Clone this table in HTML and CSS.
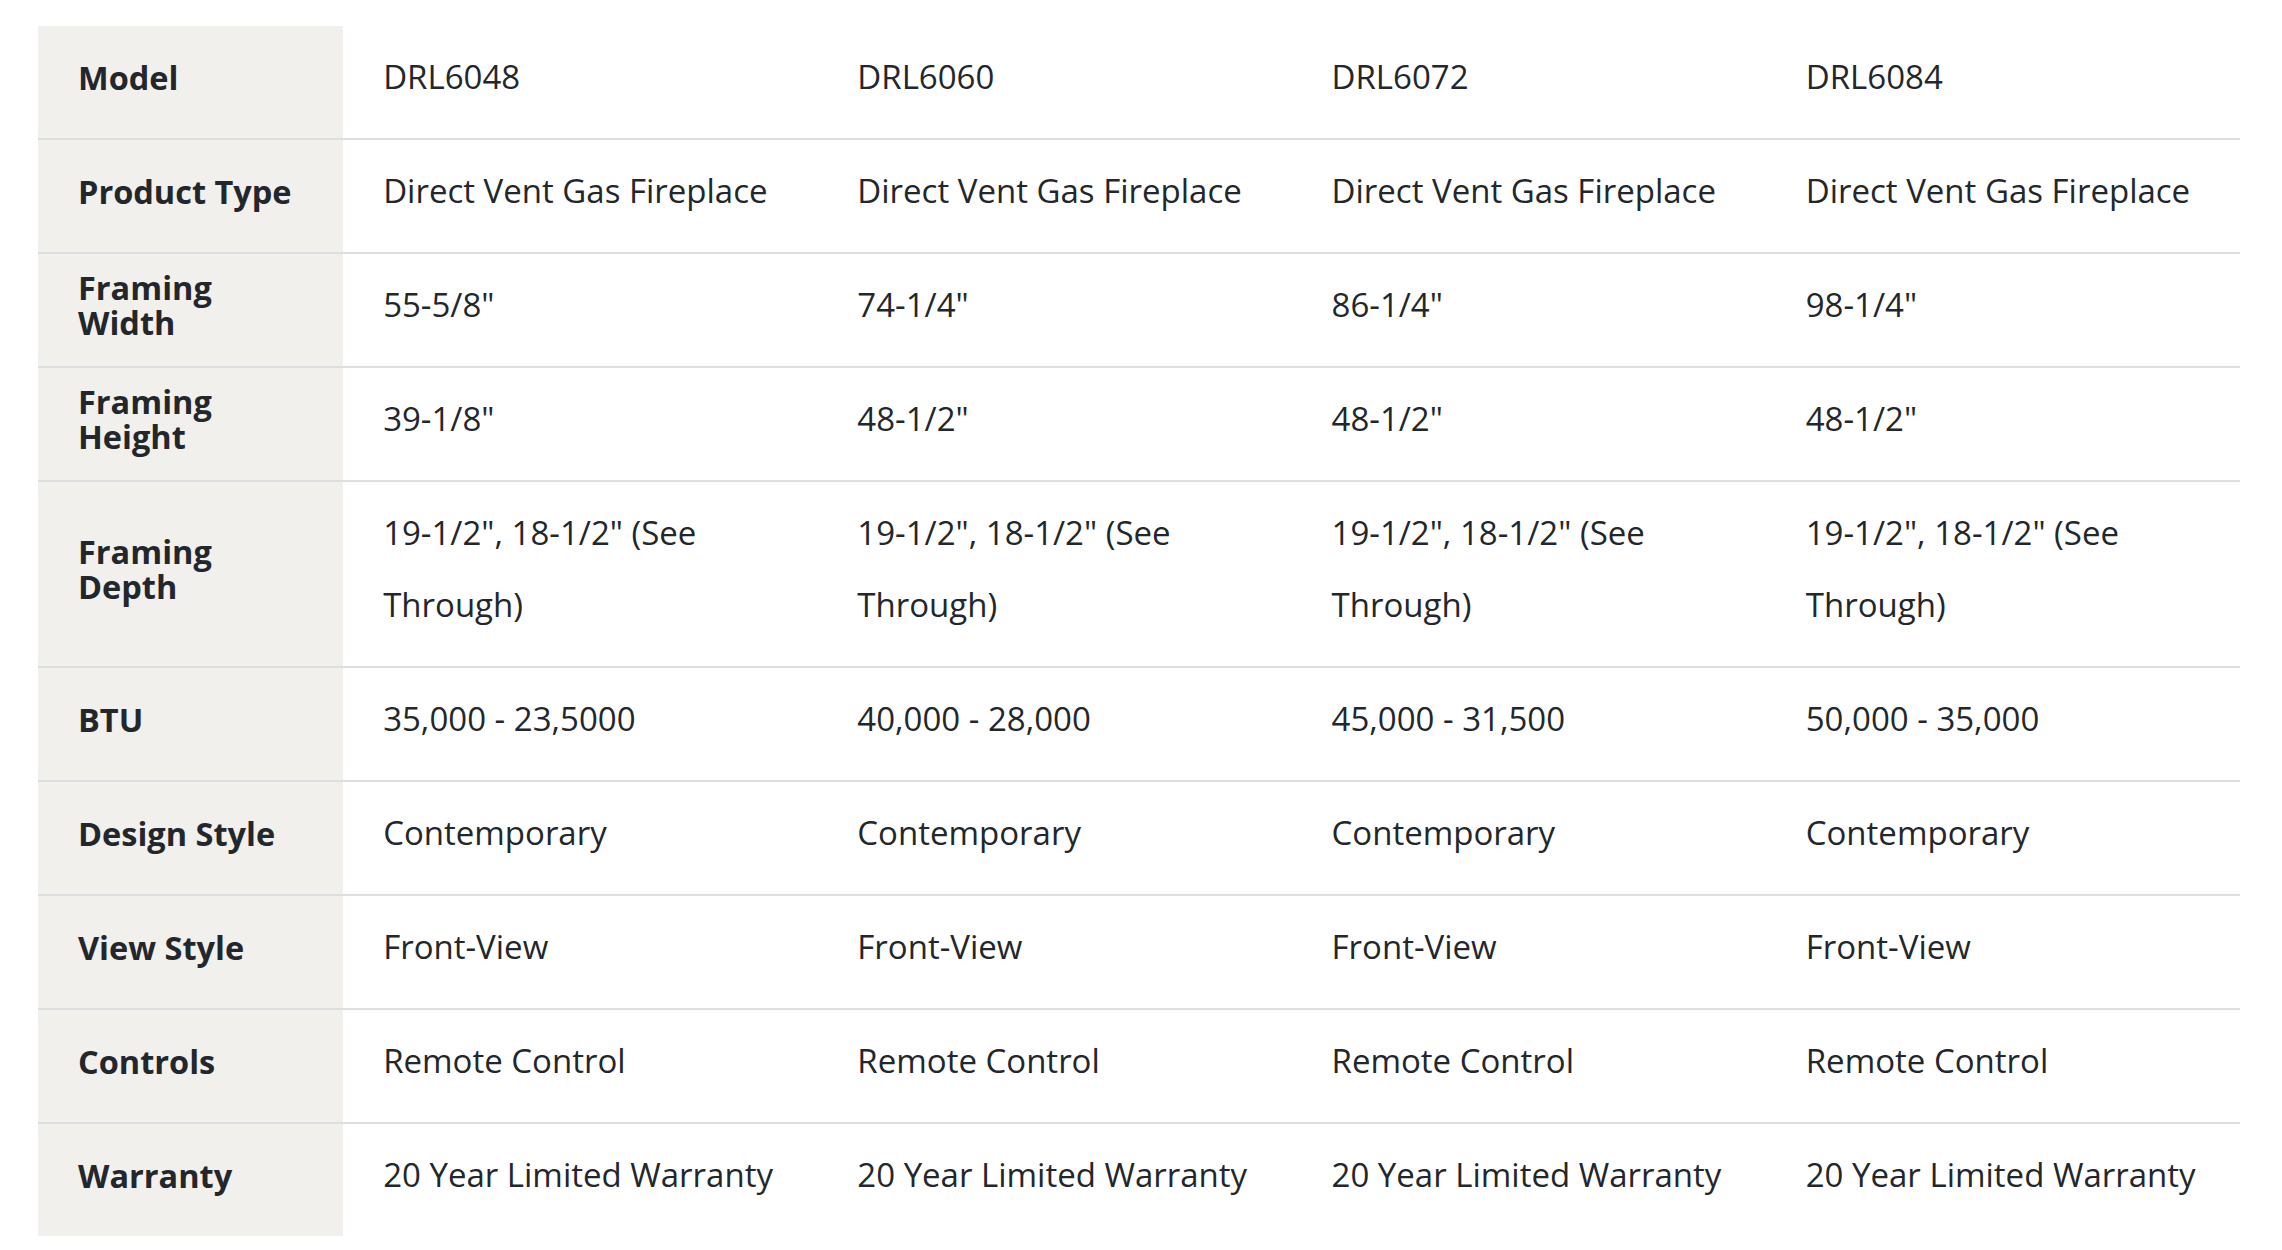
FILE: index.html
```html
<!DOCTYPE html>
<html lang="en">
<head>
  <meta charset="UTF-8">
  <meta name="viewport" content="width=device-width, initial-scale=1.0">
  <title>Specifications</title>
  <link rel="stylesheet" href="styles.css">
</head>
<body>
  <table class="specs">
    <colgroup>
      <col class="col-label">
      <col class="col-model">
      <col class="col-model">
      <col class="col-model">
      <col class="col-model">
    </colgroup>
    <tbody>
      <tr>
        <th>Model</th>
        <td>DRL6048</td>
        <td>DRL6060</td>
        <td>DRL6072</td>
        <td>DRL6084</td>
      </tr>
      <tr>
        <th>Product Type</th>
        <td>Direct Vent Gas Fireplace</td>
        <td>Direct Vent Gas Fireplace</td>
        <td>Direct Vent Gas Fireplace</td>
        <td>Direct Vent Gas Fireplace</td>
      </tr>
      <tr>
        <th>Framing Width</th>
        <td>55-5/8"</td>
        <td>74-1/4"</td>
        <td>86-1/4"</td>
        <td>98-1/4"</td>
      </tr>
      <tr>
        <th>Framing Height</th>
        <td>39-1/8"</td>
        <td>48-1/2"</td>
        <td>48-1/2"</td>
        <td>48-1/2"</td>
      </tr>
      <tr>
        <th>Framing Depth</th>
        <td>19-1/2", 18-1/2" (See Through)</td>
        <td>19-1/2", 18-1/2" (See Through)</td>
        <td>19-1/2", 18-1/2" (See Through)</td>
        <td>19-1/2", 18-1/2" (See Through)</td>
      </tr>
      <tr>
        <th>BTU</th>
        <td>35,000 - 23,5000</td>
        <td>40,000 - 28,000</td>
        <td>45,000 - 31,500</td>
        <td>50,000 - 35,000</td>
      </tr>
      <tr>
        <th>Design Style</th>
        <td>Contemporary</td>
        <td>Contemporary</td>
        <td>Contemporary</td>
        <td>Contemporary</td>
      </tr>
      <tr>
        <th>View Style</th>
        <td>Front-View</td>
        <td>Front-View</td>
        <td>Front-View</td>
        <td>Front-View</td>
      </tr>
      <tr>
        <th>Controls</th>
        <td>Remote Control</td>
        <td>Remote Control</td>
        <td>Remote Control</td>
        <td>Remote Control</td>
      </tr>
      <tr>
        <th>Warranty</th>
        <td>20 Year Limited Warranty</td>
        <td>20 Year Limited Warranty</td>
        <td>20 Year Limited Warranty</td>
        <td>20 Year Limited Warranty</td>
      </tr>
    </tbody>
  </table>
</body>
</html>
```

FILE: styles.css
```css
* {
  margin: 0;
  padding: 0;
  box-sizing: border-box;
}

body {
  background: #fff;
  padding: 26px 0 0 38px;
  font-family: 'Open Sans', 'Liberation Sans', sans-serif;
  color: #23272c;
}

.specs {
  width: 2202px;
  border-collapse: collapse;
  table-layout: fixed;
}

.col-label {
  width: 305px;
}

.col-model {
  width: 474px;
}

.specs tr {
  border-top: 2px solid #dcdee2;
}

.specs tr:first-child {
  border-top: none;
}

.specs th,
.specs td {
  padding: 15px 20px 25px 40px;
  font-size: 33px;
  text-align: left;
  vertical-align: middle;
}

.specs th {
  padding-right: 40px;
  background: #f1f0ed;
  font-weight: 700;
  font-size: 32.5px;
  line-height: 35px;
}

.specs td {
  font-weight: 400;
  line-height: 72px;
}
```
